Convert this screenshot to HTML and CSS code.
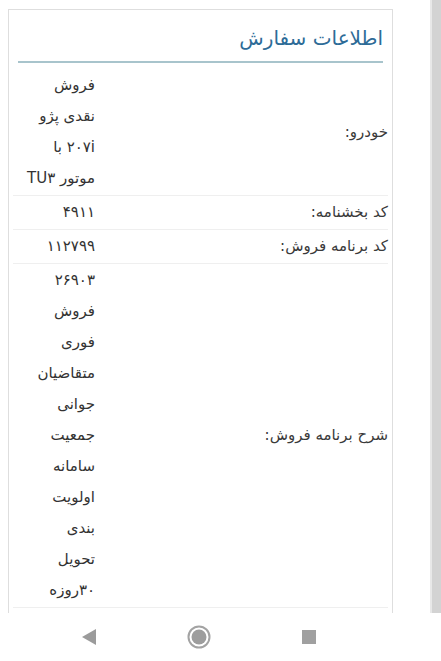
FILE: index.html
```html
<!DOCTYPE html>
<html lang="fa" dir="rtl">
<head>
    <meta charset="UTF-8">
    <meta name="viewport" content="width=device-width, initial-scale=1.0">
    <title>اطلاعات سفارش</title>
    <link rel="stylesheet" href="styles.css">
</head>
<body>
    <div class="viewport">
        <div class="scrollbar"></div>
        <div class="content">
            <div class="card">
                <h2 class="card-title">اطلاعات سفارش</h2>
                <div class="info">
                    <div class="row">
                        <div class="label">خودرو:</div>
                        <div class="value">فروش<br>نقدی پژو<br>۲۰۷i با<br>موتور TU۳</div>
                    </div>
                    <div class="row">
                        <div class="label">کد بخشنامه:</div>
                        <div class="value">۴۹۱۱</div>
                    </div>
                    <div class="row">
                        <div class="label">کد برنامه فروش:</div>
                        <div class="value">۱۱۲۷۹۹</div>
                    </div>
                    <div class="row">
                        <div class="label">شرح برنامه فروش:</div>
                        <div class="value">۲۶۹۰۳<br>فروش<br>فوری<br>متقاضیان<br>جوانی<br>جمعیت<br>سامانه<br>اولویت<br>بندی<br>تحویل<br>۳۰روزه</div>
                    </div>
                </div>
            </div>
        </div>
    </div>
    <div class="navbar" dir="ltr">
        <svg class="nav-icon" width="14" height="16" viewBox="0 0 14 16">
            <polygon points="0,8 14,0 14,16" fill="#9b9b9b"/>
        </svg>
        <svg class="nav-icon" width="24" height="24" viewBox="0 0 24 24">
            <circle cx="12" cy="12" r="10.5" fill="none" stroke="#a3a3a3" stroke-width="2"/>
            <circle cx="12" cy="12" r="7.5" fill="#9d9d9d"/>
        </svg>
        <svg class="nav-icon" width="14" height="14" viewBox="0 0 14 14">
            <rect x="0" y="0" width="14" height="14" fill="#a0a0a0"/>
        </svg>
    </div>
</body>
</html>
```

FILE: styles.css
```css
body {
    margin: 0;
    padding: 0;
    background: #fff;
    font-family: "DejaVu Sans", "Noto Sans", sans-serif;
    color: #333;
}

.viewport {
    display: flex;
    height: 613px;
    overflow: hidden;
}

/* page scroll track on the right edge */
.scrollbar {
    width: 9px;
    background: #d3d3d3;
    border-left: 2px solid #e8e8e8;
}

.content {
    flex: 1;
    padding: 9px 0 0 8px;
    display: flex;
    justify-content: flex-end;
}

.card {
    width: 385px;
    border: 1px solid #dedede;
    border-bottom: none;
    box-sizing: border-box;
}

.card-title {
    margin: 0 9px 0 9px;
    padding: 14px 0 9px;
    font-size: 20px;
    line-height: 28px;
    font-weight: normal;
    color: #2d6b97;
    border-bottom: 2px solid #a8c4cc;
}

.info {
    margin: 6px 4px 0 4px;
}

.row {
    display: grid;
    grid-template-columns: 1fr 87px;
    border-bottom: 1px solid #efefef;
}

.label {
    align-self: center;
    font-size: 15px;
    line-height: 31px;
    padding: 1px 0;
    color: #3a3a3a;
    white-space: nowrap;
}

.value {
    font-size: 15px;
    line-height: 31px;
    padding: 1px 5px 1px 0;
    white-space: nowrap;
}

.navbar {
    height: 48px;
    display: flex;
    align-items: center;
    padding-left: 82px;
    gap: 91px;
}
```
